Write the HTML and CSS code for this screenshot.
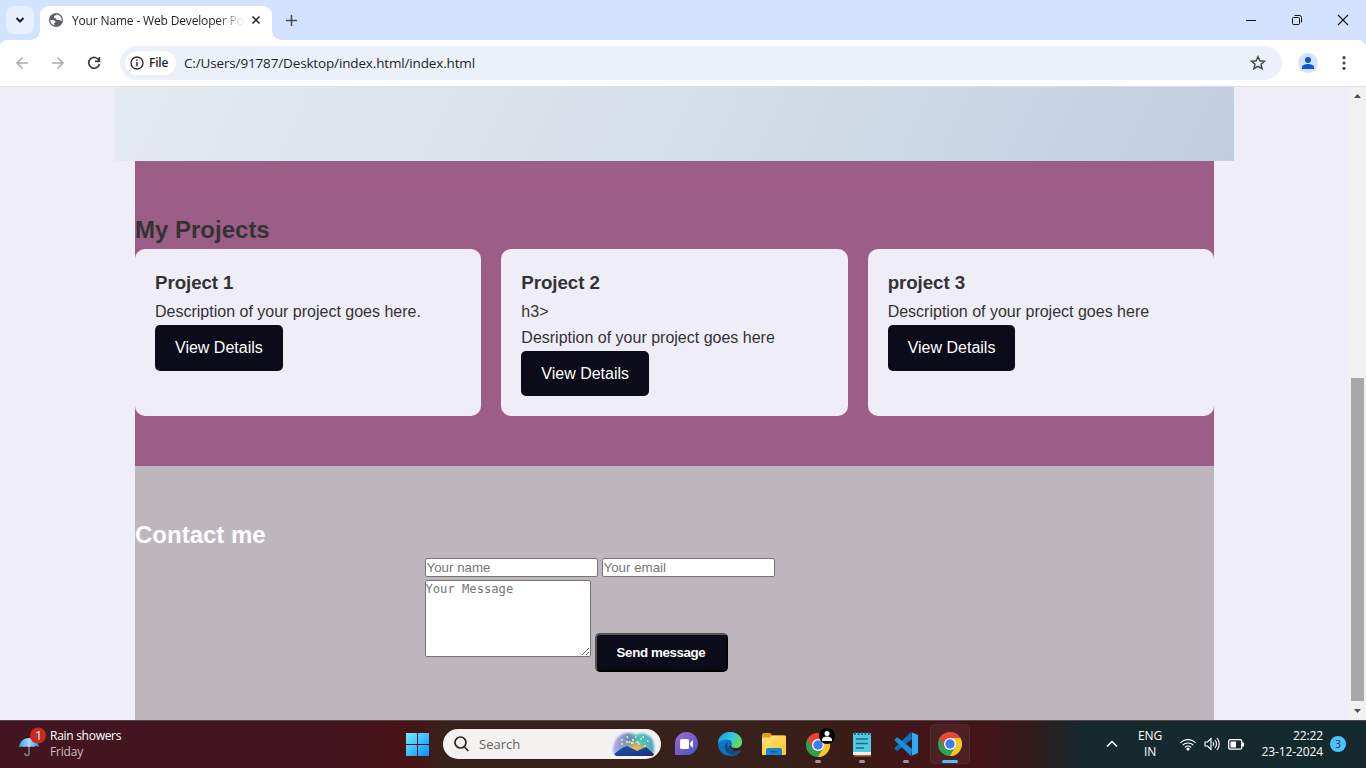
FILE: index.html
```html
<!DOCTYPE html>
<html lang="en">
<head>
<meta charset="utf-8">
<title>Your Name - Web Developer Portfolio</title>
<link rel="stylesheet" href="styles.css">
</head>
<body>
<header class="tabstrip">
  <div class="tab-search"><svg width="28" height="28" viewBox="0 0 28 28"><path d="M10.500 12 14 15.500l3.500-3.500" fill="none" stroke="#1f1f1f" stroke-width="2"/></svg></div>
  <div class="tab">
    <svg class="globe" width="14" height="14" viewBox="0 0 14 14"><circle cx="7" cy="7" r="7" fill="#5f6368"/><path d="M8 1.500c-2 1-3.500 1.300-3 3 .3 1.200 2.300.5 2.500 1.700.2 1 2 .7 3 .7l2.200 1A5.700 5.700 0 0 0 8 1.500ZM1.400 7c1.500.2 4.300-.2 5 1.500.6 1.300-1.600 1.200-1.500 2.500l.8 1.500A5.700 5.700 0 0 1 1.400 7Z" fill="#fff"/></svg>
    <span class="tab-title">Your Name - Web Developer Po</span>
    <svg class="tab-close" width="8" height="8" viewBox="0 0 8 8"><path d="m.5.500 7 7m0-7-7 7" stroke="#1f1f1f" stroke-width="1.500"/></svg>
  </div>
  <svg class="new-tab" width="11" height="11" viewBox="0 0 11 11"><path d="M5.500 0v11M0 5.500h11" stroke="#474747" stroke-width="1.500"/></svg>
  <div class="window-buttons">
    <svg width="12" height="12" viewBox="0 0 12 12"><path d="M1 6.500h10" stroke="#111"/></svg>
    <svg width="12" height="12" viewBox="0 0 12 12" fill="none" stroke="#111"><rect x="1.500" y="3.500" width="7" height="7" rx="1"/><path d="M3.500 1.500h5a2 2 0 0 1 2 2v5"/></svg>
    <svg width="12" height="12" viewBox="0 0 12 12"><path d="m1 1 10 10m0-10L1 11" stroke="#111" stroke-width="1.100"/></svg>
  </div>
</header>
<nav class="toolbar">
  <svg class="nav-icon" width="14" height="14" viewBox="0 0 14 14" fill="none" stroke="#aaa" stroke-width="1.500"><path d="M13 7H2m5.500-5.500L2 7l5.500 5.500"/></svg>
  <svg class="nav-icon" width="14" height="14" viewBox="0 0 14 14" fill="none" stroke="#aaa" stroke-width="1.500"><path d="M1 7h11M6.500 1.500 12 7l-5.500 5.500"/></svg>
  <svg class="nav-icon" width="14" height="14" viewBox="0 0 14 14" fill="none" stroke="#3c3c3c" stroke-width="1.700"><path d="M12 4.500A5.400 5.400 0 1 0 12.400 8M12.400 1v4.300H8"/></svg>
  <div class="omnibox">
    <span class="chip"><svg width="14" height="14" viewBox="0 0 14 14"><circle cx="7" cy="7" r="6" fill="none" stroke="#303030" stroke-width="1.400"/><path d="M7 6v4.200M7 3.500v1.500" stroke="#303030" stroke-width="1.500"/></svg><b>File</b></span>
    <span class="url">C:/Users/91787/Desktop/index.html/index.html</span>
    <svg class="star" width="16" height="16" viewBox="0 0 16 16"><path d="m8 1.600 1.900 4.200 4.600.4-3.500 3 1.100 4.500L8 11.300l-4.100 2.400L5 9.200l-3.500-3 4.600-.4Z" fill="none" stroke="#444" stroke-width="1.400"/></svg>
  </div>
  <svg class="avatar" width="20" height="20" viewBox="0 0 20 20"><circle cx="10" cy="10" r="10" fill="#d3e3fd"/><circle cx="10" cy="7" r="3" fill="#0b57d0"/><path d="M4 16v-2c0-2 3.500-3 6-3s6 1 6 3v2Z" fill="#0b57d0"/></svg>
  <svg class="menu" width="4" height="14" viewBox="0 0 4 14" fill="#474747"><circle cx="2" cy="1.700" r="1.600"/><circle cx="2" cy="7" r="1.600"/><circle cx="2" cy="12.300" r="1.600"/></svg>
</nav>
<div class="viewport">
  <main class="page">
    <div class="hero"></div>
    <section class="projects">
      <h2>My Projects</h2>
      <div class="grid">
        <article class="card"><h3>Project 1</h3><p>Description of your project goes here.</p><a class="btn">View Details</a></article>
        <article class="card"><h3>Project 2</h3><p>h3&gt;</p><p>Desription of your project goes here</p><a class="btn">View Details</a></article>
        <article class="card"><h3>project 3</h3><p>Description of your project goes here</p><a class="btn">View Details</a></article>
      </div>
    </section>
    <section class="contact">
      <h2>Contact me</h2>
      <form class="form">
        <div class="row"><input class="field" placeholder="Your name"><input class="field" placeholder="Your email"></div>
        <div class="row message-row"><textarea class="message" placeholder="Your Message"></textarea><button class="send" type="button">Send message</button></div>
      </form>
    </section>
  </main>
  <div class="scrollbar">
    <svg width="7" height="4" viewBox="0 0 7 4"><path d="M0 4 3.500 0 7 4Z" fill="#505050"/></svg>
    <div class="thumb"></div>
    <svg width="7" height="4" viewBox="0 0 7 4"><path d="M0 0 3.500 4 7 0Z" fill="#505050"/></svg>
  </div>
</div>
<footer class="taskbar">
  <div class="weather">
    <svg width="28" height="31" viewBox="0 0 28 31"><defs><linearGradient id="umb" x2="1"><stop stop-color="#3f98e4"/><stop offset=".5" stop-color="#a7dcff"/><stop offset="1" stop-color="#348bdc"/></linearGradient></defs><path d="M11 18v8.500a2 2 0 0 1-4 0V26" fill="none" stroke="#828389" stroke-width="1.400"/><path d="M1 20c1-6 5-9 10-9s9 3 10 9c-2-1.500-4-1.500-5 0q-2.500-1-5 0-2.500-1-5 0-2.500-1-5 0Z" fill="url(#umb)"/><circle cx="20" cy="8.500" r="8" fill="#c92a20"/><text x="17.300" y="12.500" class="badge-one">1</text></svg>
    <div><div class="w-title">Rain showers</div><div class="w-sub">Friday</div></div>
  </div>
  <div class="center">
    <svg class="win" width="23" height="23" viewBox="0 0 23 23"><defs><linearGradient id="wing" x2="1" y2="1" gradientUnits="objectBoundingBox"><stop stop-color="#73edff"/><stop offset="1" stop-color="#078fff"/></linearGradient></defs><path d="M0 0h11v11H0ZM12 0h11v11H12ZM0 12h11v11H0ZM12 12h11v11H12Z" fill="url(#wing)"/></svg>
    <div class="search"><svg width="16" height="16" viewBox="0 0 16 16" fill="none" stroke="#252525" stroke-width="1.700"><circle cx="6.500" cy="6.500" r="5.500"/><path d="m10.500 11 3.800 4"/></svg><span>Search</span>
      <svg class="scene" width="45" height="24" viewBox="0 0 45 24"><defs><linearGradient id="sky" x2="1"><stop stop-color="#b3aeea"/><stop offset=".4" stop-color="#6f8cb0"/><stop offset=".65" stop-color="#39c5bd"/><stop offset="1" stop-color="#5ca1c5"/></linearGradient><linearGradient id="hill" x2="1" y2="1"><stop stop-color="#0963aa"/><stop offset="1" stop-color="#25267c"/></linearGradient><radialGradient id="glow"><stop stop-color="#ffb354"/><stop offset="1" stop-color="#ffb354" stop-opacity="0"/></radialGradient><filter id="soft" x="-10%" y="-10%" width="120%" height="120%"><feGaussianBlur stdDeviation=".9"/></filter></defs><path d="M2 21C1 9 8 1 17 1c4 0 6 1 8 2 8-4 18 1 18 11v7Z" fill="url(#sky)" filter="url(#soft)"/><ellipse cx="25" cy="16" rx="15" ry="8" fill="url(#glow)"/><path d="m3 22 8-6 5-2 10 5 9-4 8 7c0 1-1 2-2 2H5Z" fill="url(#hill)"/><path d="M10 8h1.500m4-3h1.500m4 3h2m1-3h1.500m0 5h2m4-5h1.500m3 4h1.500m-27 3h1.500m3-2h2m10 2h1.500m5 2h1.500m-15-3h2.500m-5-1h2m10-3h1.500" stroke="#fff4c6" stroke-width="1.300"/></svg>
    </div>
    <div class="apps">
      <div class="app"><svg width="26" height="26" viewBox="0 0 26 26"><defs><linearGradient id="chat" x2=".8" y2="1"><stop stop-color="#a06bcb"/><stop offset="1" stop-color="#4b55cb"/></linearGradient></defs><path d="M2 24V12.500A11.500 11.500 0 1 1 13.500 24Z" fill="url(#chat)"/><rect x="7" y="8" width="9" height="10" rx="1.500" fill="#fff"/><path d="m17 12 3-3v8l-3-3Z" fill="#fff"/></svg></div>
      <div class="app"><svg width="26" height="26" viewBox="0 0 26 26"><defs><linearGradient id="edge" x2="1" y2=".4"><stop stop-color="#1f93d8"/><stop offset=".55" stop-color="#30c5e5"/><stop offset="1" stop-color="#63db5c"/></linearGradient><linearGradient id="edge2" x2=".7" y2="1"><stop stop-color="#147ecc"/><stop offset="1" stop-color="#0e69bd"/></linearGradient></defs><path d="M1 12C1 5 7 1 13 1c7 0 12 4.500 12 10 0 4-3 6-6.500 6-3 0-4.500-1-4-2.500l-3 1 6 5.500c3 0 5-1 6.500-2C22 23 18 25 13.500 25 6 25 1 20 1 12Z" fill="url(#edge2)"/><path d="M1 12C2 5 7 1 13 1c7 0 12 4.500 12 10 0 4-3 6-6.500 6-3 0-4.500-1-4-2.500 1.500-3-.5-6-5-6C5 8.500 2 11 1 12Z" fill="url(#edge)"/><path d="M11 10.500c-5 3-4 11 3 13.500 4 0 7.500-2 9.500-5-2 1-5 1.500-8 .5-5-2-6-6-4.500-9Z" fill="#124a85"/></svg></div>
      <div class="app"><svg width="26" height="26" viewBox="0 0 26 26"><defs><linearGradient id="fold" x2="1" y2="1"><stop stop-color="#ffe27b"/><stop offset="1" stop-color="#ffc52d"/></linearGradient></defs><path d="M1 3.500 2.500 2H9l2.500 2.500H23V12H1Z" fill="#dda013"/><path d="M1 6.500h8l2.500-2H24q1 0 1 1v17.500q0 1-1 1H2q-1 0-1-1Z" fill="url(#fold)"/><path d="M5 24v-5q0-2 2-2h12q2 0 2 2v5Z" fill="#1684d2"/><path d="M9 20h8v1.500H9Z" fill="#0b5c9e"/></svg></div>
      <div class="app running profile"><svg width="30" height="32" viewBox="-1 -6 30 32"><g id="chrome"><circle cx="13" cy="13" r="12" fill="#34a04d"/><path d="M2.600 7A12 12 0 0 1 23.400 7H13L7.800 16Z" fill="#e94435"/><path d="M13 7h10.400A12 12 0 0 1 13 25l5.200-9Z" fill="#fbc529"/><circle cx="13" cy="13" r="6" fill="#fff"/><circle cx="13" cy="13" r="4.700" fill="#397df4"/></g><circle cx="22" cy="4" r="8" fill="#000"/><circle cx="22" cy="1.500" r="2.500" fill="#fff"/><path d="M17 9V8c0-2 2-3.500 5-3.500S27 6 27 8v1Z" fill="#fff"/></svg></div>
      <div class="app running"><svg width="26" height="26" viewBox="0 0 26 26"><rect x="4" y="2" width="18" height="21" rx="1" fill="#52c7df"/><path d="M4 21h18v3H4Z" fill="#f2f2ed"/><path d="M5 24.700h17" stroke="#bf6526" stroke-width="1.500"/><path d="M6 1v3m3.500-3v3M13 1v3m3.500-3v3M20 1v3" stroke="#125e78" stroke-width="1.500"/><path d="M7 8h12M7 12.500h12M7 17h8" stroke="#12718c" stroke-width="1.700"/></svg></div>
      <div class="app running"><svg width="26" height="26" viewBox="0 0 26 26"><path d="M18 1 2 16.500q-1 1 0 1.700l1.500 1.300q.7.500 1.500 0L19 8Z" fill="#0874bb"/><path d="M18 25 2 9.800Q1 8.700 2 8l1.500-1.300q.7-.5 1.500 0L19 18Z" fill="#1592db"/><path d="M18 1 25 4v18l-7 3q1-.5 1-2V3q0-1.500-1-2Z" fill="#2dacf5"/></svg></div>
      <div class="app active"><svg width="26" height="26" viewBox="0 0 26 26"><use href="#chrome"/></svg></div>
    </div>
  </div>
  <div class="tray">
    <svg class="chev" width="12" height="8" viewBox="0 0 12 8"><path d="m1 6.500 5-5 5 5" fill="none" stroke="#fff" stroke-width="1.500"/></svg>
    <div class="lang"><div>ENG</div><div>IN</div></div>
    <svg class="wifi" width="16" height="13" viewBox="0 0 16 13" fill="none" stroke="#fff" stroke-width="1.100"><path d="M.5 5a10 10 0 0 1 15 0M2.700 7.200a7.400 7.400 0 0 1 10.600 0M4.900 9.300a4.500 4.500 0 0 1 6.200 0"/><circle cx="8" cy="11" r="1" fill="#fff"/></svg>
    <svg class="sound" width="17" height="14" viewBox="0 0 17 14" fill="none" stroke="#fff" stroke-width="1.100"><path d="M1 5h2.500L7 1.500v11L3.500 9H1ZM9 5q1.500 2 0 4M11 3q3 4 0 8M13 1q4.500 6 0 12"/></svg>
    <svg class="battery" width="17" height="11" viewBox="0 0 17 11"><rect x=".7" y=".7" width="13" height="9.500" rx="1.500" fill="none" stroke="#fff" stroke-width="1.300"/><path d="M2.500 2.500H8v6H2.500ZM14 3.500h2v4h-2Z" fill="#fff"/></svg>
    <div class="clock"><div class="time">22:22</div><div class="date">23-12-2024</div></div>
    <div class="count">3</div>
  </div>
</footer>
</body>
</html>
```
FILE: styles.css
```css
* { box-sizing: border-box; margin: 0; padding: 0; }
body { width: 1366px; height: 768px; overflow: hidden; display: flex; flex-direction: column; background: #fff; font-family: "Open Sans", "Noto Sans", sans-serif; font-size: 12px; color: #1f1f1f; }
svg { display: block; flex: none; overflow: visible; }

.tabstrip { height: 40px; background: #d3e3fd; display: flex; align-items: flex-start; padding-left: 6px; flex: none; }
.tab-search { width: 28px; height: 28px; margin-top: 6px; border-radius: 9px; background: #e9f1fe; }
.tab { position: relative; width: 232px; height: 34px; margin: 6px 0 0 6px; padding: 0 12px 6px 9px; background: #fff; border-radius: 9px 9px 0 0; display: flex; align-items: center; }
.tab::before, .tab::after { content: ""; position: absolute; bottom: 0; width: 9px; height: 9px; }
.tab::before { left: -9px; background: radial-gradient(circle at 0 0, transparent 8.5px, #fff 9px); }
.tab::after { right: -9px; background: radial-gradient(circle at 100% 0, transparent 8.5px, #fff 9px); }
.tab-title { width: 174px; margin-left: 9px; white-space: nowrap; font-size: 12px; letter-spacing: -.16px; -webkit-mask-image: linear-gradient(90deg, #000 145px, transparent 172px); mask-image: linear-gradient(90deg, #000 145px, transparent 172px); }
.tab-close { margin-left: auto; }
.new-tab { margin: 15px 0 0 14px; }
.window-buttons { margin-left: auto; display: flex; gap: 34px; padding: 14px 17px 0 0; }

.toolbar { height: 47px; flex: none; display: flex; align-items: center; padding: 0 20px 1px 15px; border-bottom: 1px solid #dfdfe3; background: radial-gradient(circle at 8px 8px, #fff 8px, #d3e3fd 8.5px) 0 0 / 8px 8px no-repeat, radial-gradient(circle at 0 8px, #fff 8px, #d3e3fd 8.5px) 100% 0 / 8px 8px no-repeat, #fff; }
.nav-icon { margin-right: 22px; }
.omnibox { width: 1162px; height: 34px; margin-left: -3px; padding: 0 16px 0 5px; border-radius: 17px; background: #ebf0fa; display: flex; align-items: center; }
.chip { width: 51px; height: 24px; padding-left: 5px; border-radius: 12px; background: #fff; display: flex; align-items: center; gap: 5px; }
.chip b { font-weight: 600; font-size: 12px; letter-spacing: -.2px; }
.url { margin-left: 8px; font-size: 13.5px; letter-spacing: -.15px; white-space: nowrap; }
.star { margin-left: auto; }
.avatar { margin-left: 16px; }
.menu { margin-left: auto; }

.viewport { height: 633px; flex: none; display: flex; background: #efedf8; font-family: "Liberation Sans", Arial, sans-serif; font-size: 16px; line-height: 1.6; color: #333; overflow: hidden; }
.page { width: 1119px; margin-left: 115px; }
.hero { height: 74px; background: linear-gradient(115deg, #e5eaf1 0%, #dee5ee 22%, #d5dfe9 50%, #cbd6e5 76%, #c1cde1 100%); }
.projects { margin: 0 20px; height: 305px; padding-top: 50px; background: #9c5e87; }
h2 { font-size: 24px; line-height: 38.4px; }
h3 { font-size: 18.72px; line-height: 28.95px; padding-bottom: 1px; letter-spacing: -.06px; }
.grid { display: grid; grid-template-columns: repeat(3, 1fr); gap: 20px; }
.card { padding: 20px; border-radius: 10px; background: #efedf8; }
.btn { display: inline-block; padding: 10px 20px; border-radius: 5px; background: #0c0b1a; color: #fff; vertical-align: top; }
.contact { margin: 0 20px; height: 254px; padding-top: 50px; background: #bdb7bd; }
.contact h2 { color: #fff; }
.form { width: 500px; margin: 0 auto; padding-top: 3.6px; }
.row { display: flex; gap: 4px; }
.field { width: 173px; height: 19px; padding: 0 1px; border: 1px solid #767676; border-radius: 2px; background: #fff; font: 13.333px "Liberation Sans", Arial, sans-serif; }
.field::placeholder, .message::placeholder { color: #757575; }
.message-row { margin-top: 3px; align-items: flex-start; }
.message { width: 166px; height: 77px; border: 1px solid #767676; border-radius: 2px; background: #fff; font: 12.15px/17px "DejaVu Sans Mono", monospace; }
.send { width: 133px; height: 39px; margin-top: 53px; border: 2px solid; border-color: #555 #000 #000 #555; border-radius: 5px; background: #0c0b1a; color: #fff; font: bold 13.333px "Liberation Sans", Arial, sans-serif; letter-spacing: -.38px; white-space: nowrap; }
.scrollbar { width: 17px; margin-left: auto; padding: 7px 0 7px; background: #f1f1f1; display: flex; flex-direction: column; align-items: center; }
.thumb { width: 13px; height: 323px; margin: auto 0 8px; background: #a8a8a8; }

.taskbar { height: 48px; flex: none; display: flex; align-items: center; box-shadow: inset 0 1px #57494a; background: linear-gradient(90deg, #431522 0, #431520 330px, #481316 410px, #38211a 445px, #38211a 750px, #3a1c17 850px, #421618 900px, #431418 980px, #32191b 1030px, #16292d 1085px, #152a2e 100%); color: #fff; line-height: 16px; }
.weather { width: 406px; padding-left: 18px; display: flex; align-items: center; gap: 4px; }
.weather svg { margin-top: -4px; }
.badge-one { font-size: 12px; fill: #fff; }
.w-title { letter-spacing: -.28px; }
.w-sub { color: #c9bdc1; letter-spacing: -.2px; }
.center { display: flex; align-items: center; }
.search { width: 218px; height: 30px; margin-left: 14px; padding: 0 5px 0 11px; border-radius: 15px; background: #f3f2f1; display: flex; align-items: center; color: #626160; font-size: 13px; }
.search span { margin-left: 9px; }
.scene { margin-left: auto; }
.apps { display: flex; gap: 4px; margin-left: 5px; }
.app { position: relative; width: 40px; height: 40px; display: flex; align-items: center; justify-content: center; border-radius: 4px; }
.profile svg { margin: -5px 0 0 2px; }
.running::after, .active::after { content: ""; position: absolute; bottom: 1px; left: 17px; width: 6px; height: 3px; border-radius: 2px; background: #a29a99; }
.active { background: #4b2123; border: 1px solid #56292c; }
.active::after { left: 11px; bottom: 0; width: 16px; background: #52bdf5; }
.tray { flex: 1; display: flex; align-items: center; padding-right: 20px; }
.chev { margin-left: 136px; }
.lang { width: 40px; margin-left: 12px; text-align: center; letter-spacing: -.2px; }
.wifi { margin-left: 10px; }
.sound { margin-left: 8px; }
.battery { margin-left: 7px; }
.clock { margin-left: auto; text-align: right; margin-right: 7px; letter-spacing: -.1px; white-space: nowrap; font-size: 12px; }
.count { width: 16px; height: 16px; border-radius: 8px; background: #4cc2ff; color: #16313b; text-align: center; font-size: 10px; line-height: 16px; }
```
